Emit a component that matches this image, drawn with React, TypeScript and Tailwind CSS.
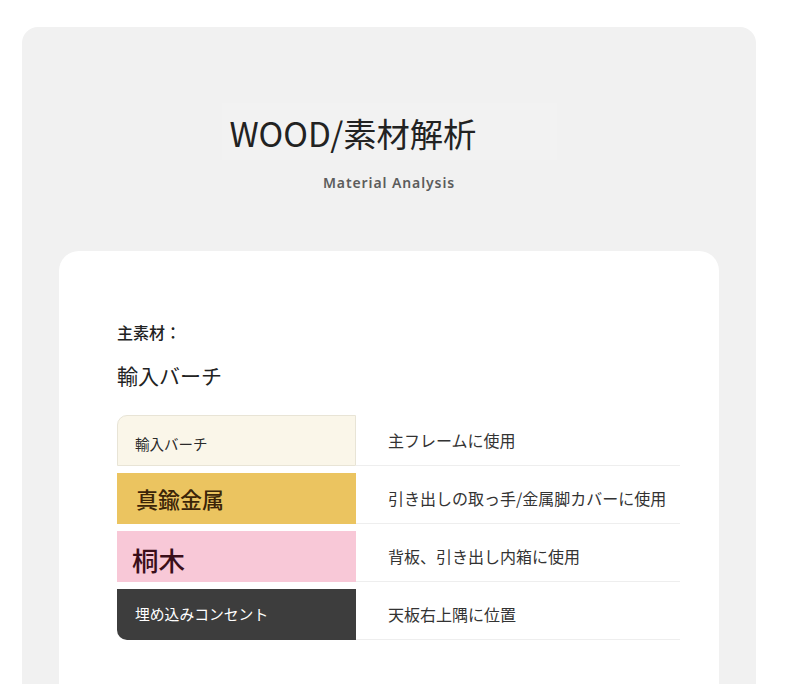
const rows = [
  {
    name: "輸入バーチ",
    use: "主フレームに使用",
    cell: "bg-[#faf6e9] border border-[#e8e4d6] rounded-tl-[10px] text-[14.5px] text-[#2a2a2a] pl-[17px] pt-[6px]",
  },
  {
    name: "真鍮金属",
    use: "引き出しの取っ手/金属脚カバーに使用",
    cell: "bg-[#ebc460] text-[22px] font-medium text-[#3b2408] pl-[19px]",
  },
  {
    name: "桐木",
    use: "背板、引き出し内箱に使用",
    cell: "bg-[#f8c8d7] text-[26.5px] font-medium text-[#3a0f1a] pl-[15px] pt-[6px]",
  },
  {
    name: "埋め込みコンセント",
    use: "天板右上隅に位置",
    cell: "bg-[#3d3d3d] rounded-bl-[10px] text-[14.8px] text-white pl-[18px]",
  },
];

export default function App() {
  return (
    <div
      className="min-h-[684px] bg-white pt-[27px] pl-[22px] overflow-hidden"
      style={{ fontFamily: '"Noto Sans", "Noto Sans CJK JP", sans-serif' }}
    >
      <div className="w-[734px] h-[700px] rounded-[16px] bg-[#f1f1f1] px-[37px] pt-[76px]">
        <div className="flex flex-col items-center">
          <div className="w-[335px] h-[57px] bg-[#f2f2f2] pl-[8px] flex items-center">
            <h1
              className="text-[33.3px] leading-none text-[#222] pt-[3px]"
              style={{ fontFamily: '"Noto Sans CJK JP", sans-serif' }}
            >
              WOOD/素材解析
            </h1>
          </div>
          <p className="mt-[12px] text-[14px] font-semibold tracking-[0.9px] text-[#5c5c5c]">
            Material Analysis
          </p>
        </div>

        <div className="mt-[58px] h-[480px] rounded-[20px] bg-white pl-[58px] pr-[39px] pt-[70px]">
          <div style={{ fontFamily: '"Noto Sans CJK JP", sans-serif' }}>
            <p className="text-[16px] font-medium text-[#222] leading-[22px]">主素材：</p>
            <p className="mt-[19px] text-[21px] text-[#222] leading-[26px]">輸入バーチ</p>

            <div className="mt-[27px] flex flex-col gap-[7px]">
              {rows.map((r) => (
                <div key={r.name} className="flex h-[51px]">
                  <div className={`w-[239px] flex items-center ${r.cell}`}>{r.name}</div>
                  <div className="flex-1 flex items-center pl-[32px] border-b border-[#eeeeee] text-[16px] text-[#333]">
                    {r.use}
                  </div>
                </div>
              ))}
            </div>
          </div>
        </div>
      </div>
    </div>
  );
}
